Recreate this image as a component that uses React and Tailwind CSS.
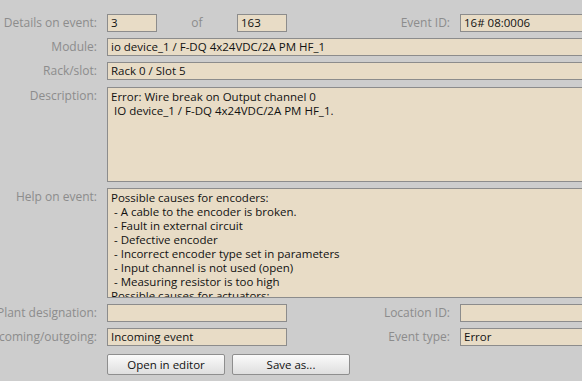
import React from 'react'

const helpLines = [
  'Possible causes for encoders:',
  ' - A cable to the encoder is broken.',
  ' - Fault in external circuit',
  ' - Defective encoder',
  ' - Incorrect encoder type set in parameters',
  ' - Input channel is not used (open)',
  ' - Measuring resistor is too high',
  'Possible causes for actuators:',
  ' - Short circuit',
]

function Label({ children, top }) {
  return (
    <div className={`w-[97px] shrink-0 flex justify-end whitespace-nowrap text-[12px] text-[#8c8c8c] ${top ? 'pt-[2px]' : 'items-center'}`}>
      {children}
    </div>
  )
}

function Field({ children, className = '' }) {
  return (
    <div className={`h-[18px] border border-[#8c8c8c] bg-[#e8dcc6] px-[3px] flex items-center whitespace-nowrap text-[#111] ${className}`}>
      {children}
    </div>
  )
}

function Button({ children }) {
  return (
    <button className="w-[118px] h-[21px] border border-[#8e8e8e] rounded-[2px] bg-gradient-to-b from-[#fbfbfb] to-[#dedede] text-[#111] flex items-center justify-center">
      {children}
    </button>
  )
}

export default function App() {
  return (
    <div className="w-[582px] h-[381px] overflow-hidden bg-[#cdcdcd] text-[11.5px] leading-[14px]" style={{ fontFamily: '"Open Sans", "Noto Sans", sans-serif' }}>
      <div className="w-[700px] pt-[14px] flex flex-col gap-[6px]">
        {/* Event counter row */}
        <div className="flex gap-[10px]">
          <Label>Details on event:</Label>
          <Field className="w-[50px]">3</Field>
          <div className="w-[60px] flex items-center justify-center text-[12px] text-[#8c8c8c]">of</div>
          <Field className="w-[50px]">163</Field>
          <div className="w-[153px] flex items-center justify-end text-[12px] text-[#8c8c8c]">Event ID:</div>
          <Field className="w-[200px]">16# 08:0006</Field>
        </div>

        <div className="flex gap-[10px]">
          <Label>Module:</Label>
          <Field className="w-[560px]">io device_1 / F-DQ 4x24VDC/2A PM HF_1</Field>
        </div>

        <div className="flex gap-[10px]">
          <Label>Rack/slot:</Label>
          <Field className="w-[560px]">Rack 0 / Slot 5</Field>
        </div>

        <div className="flex gap-[10px] mt-[1px]">
          <Label top>Description:</Label>
          <div className="w-[560px] h-[95px] border border-[#8c8c8c] bg-[#e8dcc6] px-[3px] pt-[2px] whitespace-pre text-[#111]">
            {'Error: Wire break on Output channel 0\n IO device_1 / F-DQ 4x24VDC/2A PM HF_1.'}
          </div>
        </div>

        <div className="flex gap-[10px]">
          <Label top>Help on event:</Label>
          <div className="w-[560px] h-[110px] overflow-hidden border border-[#8c8c8c] bg-[#e8dcc6] px-[3px] pt-[2px] whitespace-pre text-[#111]">
            {helpLines.join('\n')}
          </div>
        </div>

        <div className="flex gap-[10px]">
          <Label>Plant designation:</Label>
          <Field className="w-[180px]" />
          <div className="w-[153px] flex items-center justify-end text-[12px] text-[#8c8c8c]">Location ID:</div>
          <Field className="w-[200px]" />
        </div>

        <div className="flex gap-[10px]">
          <Label>Incoming/outgoing:</Label>
          <Field className="w-[180px]">Incoming event</Field>
          <div className="w-[153px] flex items-center justify-end text-[12px] text-[#8c8c8c]">Event type:</div>
          <Field className="w-[200px]">Error</Field>
        </div>

        <div className="flex gap-[7px] pl-[107px] mt-[2px]">
          <Button>Open in editor</Button>
          <Button>Save as...</Button>
        </div>
      </div>
    </div>
  )
}
